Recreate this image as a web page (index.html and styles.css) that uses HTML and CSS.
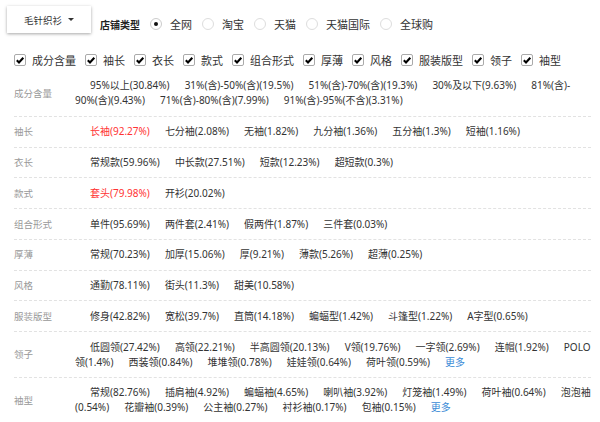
FILE: index.html
```html
<!DOCTYPE html>
<html>
<head>
<meta charset="utf-8">
<link rel="stylesheet" href="styles.css">
</head>
<body>
<div class="page">
  <div class="top">
    <div class="dropdown"><span>毛针织衫</span><span class="caret"></span></div>
    <div class="shop">
      <span class="shop-title">店铺类型</span>
      <span class="radio-item"><span class="radio on"></span><span>全网</span></span>
      <span class="radio-item"><span class="radio"></span><span>淘宝</span></span>
      <span class="radio-item"><span class="radio"></span><span>天猫</span></span>
      <span class="radio-item"><span class="radio"></span><span>天猫国际</span></span>
      <span class="radio-item"><span class="radio"></span><span>全球购</span></span>
    </div>
  </div>
  <div class="checks">
    <span class="check-item"><span class="cb"><svg viewBox="0 0 10 10"><polyline points="1.8,5.2 4,7.4 8.3,2.8"/></svg></span><span>成分含量</span></span>
    <span class="check-item"><span class="cb"><svg viewBox="0 0 10 10"><polyline points="1.8,5.2 4,7.4 8.3,2.8"/></svg></span><span>袖长</span></span>
    <span class="check-item"><span class="cb"><svg viewBox="0 0 10 10"><polyline points="1.8,5.2 4,7.4 8.3,2.8"/></svg></span><span>衣长</span></span>
    <span class="check-item"><span class="cb"><svg viewBox="0 0 10 10"><polyline points="1.8,5.2 4,7.4 8.3,2.8"/></svg></span><span>款式</span></span>
    <span class="check-item"><span class="cb"><svg viewBox="0 0 10 10"><polyline points="1.8,5.2 4,7.4 8.3,2.8"/></svg></span><span>组合形式</span></span>
    <span class="check-item"><span class="cb"><svg viewBox="0 0 10 10"><polyline points="1.8,5.2 4,7.4 8.3,2.8"/></svg></span><span>厚薄</span></span>
    <span class="check-item"><span class="cb"><svg viewBox="0 0 10 10"><polyline points="1.8,5.2 4,7.4 8.3,2.8"/></svg></span><span>风格</span></span>
    <span class="check-item"><span class="cb"><svg viewBox="0 0 10 10"><polyline points="1.8,5.2 4,7.4 8.3,2.8"/></svg></span><span>服装版型</span></span>
    <span class="check-item"><span class="cb"><svg viewBox="0 0 10 10"><polyline points="1.8,5.2 4,7.4 8.3,2.8"/></svg></span><span>领子</span></span>
    <span class="check-item"><span class="cb"><svg viewBox="0 0 10 10"><polyline points="1.8,5.2 4,7.4 8.3,2.8"/></svg></span><span>袖型</span></span>
  </div>
  <div class="rows">
    <div class="row">
      <div class="label">成分含量</div>
      <div class="vals"><span class="v">95%以上(30.84%)</span><wbr><span class="v">31%(含)-50%(含)(19.5%)</span><wbr><span class="v">51%(含)-70%(含)(19.3%)</span><wbr><span class="v">30%及以下(9.63%)</span><wbr><span class="v"><span class="nw">81%(含)-</span><wbr><span class="nw">90%(含)(9.43%)</span></span><wbr><span class="v">71%(含)-80%(含)(7.99%)</span><wbr><span class="v">91%(含)-95%(不含)(3.31%)</span></div>
    </div>
    <div class="row">
      <div class="label">袖长</div>
      <div class="vals"><span class="v red">长袖(92.27%)</span><wbr><span class="v">七分袖(2.08%)</span><wbr><span class="v">无袖(1.82%)</span><wbr><span class="v">九分袖(1.36%)</span><wbr><span class="v">五分袖(1.3%)</span><wbr><span class="v">短袖(1.16%)</span></div>
    </div>
    <div class="row">
      <div class="label">衣长</div>
      <div class="vals"><span class="v">常规款(59.96%)</span><wbr><span class="v">中长款(27.51%)</span><wbr><span class="v">短款(12.23%)</span><wbr><span class="v">超短款(0.3%)</span></div>
    </div>
    <div class="row">
      <div class="label">款式</div>
      <div class="vals"><span class="v red">套头(79.98%)</span><wbr><span class="v">开衫(20.02%)</span></div>
    </div>
    <div class="row">
      <div class="label">组合形式</div>
      <div class="vals"><span class="v">单件(95.69%)</span><wbr><span class="v">两件套(2.41%)</span><wbr><span class="v">假两件(1.87%)</span><wbr><span class="v">三件套(0.03%)</span></div>
    </div>
    <div class="row">
      <div class="label">厚薄</div>
      <div class="vals"><span class="v">常规(70.23%)</span><wbr><span class="v">加厚(15.06%)</span><wbr><span class="v">厚(9.21%)</span><wbr><span class="v">薄款(5.26%)</span><wbr><span class="v">超薄(0.25%)</span></div>
    </div>
    <div class="row">
      <div class="label">风格</div>
      <div class="vals"><span class="v">通勤(78.11%)</span><wbr><span class="v">街头(11.3%)</span><wbr><span class="v">甜美(10.58%)</span></div>
    </div>
    <div class="row">
      <div class="label">服装版型</div>
      <div class="vals"><span class="v">修身(42.82%)</span><wbr><span class="v">宽松(39.7%)</span><wbr><span class="v">直筒(14.18%)</span><wbr><span class="v">蝙蝠型(1.42%)</span><wbr><span class="v">斗篷型(1.22%)</span><wbr><span class="v">A字型(0.65%)</span></div>
    </div>
    <div class="row">
      <div class="label">领子</div>
      <div class="vals"><span class="v">低圆领(27.42%)</span><wbr><span class="v">高领(22.21%)</span><wbr><span class="v">半高圆领(20.13%)</span><wbr><span class="v">V领(19.76%)</span><wbr><span class="v">一字领(2.69%)</span><wbr><span class="v">连帽(1.92%)</span><wbr><span class="v"><span class="nw">POLO</span><wbr><span class="nw">领(1.4%)</span></span><wbr><span class="v">西装领(0.84%)</span><wbr><span class="v">堆堆领(0.78%)</span><wbr><span class="v">娃娃领(0.64%)</span><wbr><span class="v">荷叶领(0.59%)</span><wbr><span class="v more">更多</span></div>
    </div>
    <div class="row">
      <div class="label">袖型</div>
      <div class="vals"><span class="v">常规(82.76%)</span><wbr><span class="v">插肩袖(4.92%)</span><wbr><span class="v">蝙蝠袖(4.65%)</span><wbr><span class="v">喇叭袖(3.92%)</span><wbr><span class="v">灯笼袖(1.49%)</span><wbr><span class="v">荷叶袖(0.64%)</span><wbr><span class="v"><span class="nw">泡泡袖</span><wbr><span class="nw">(0.54%)</span></span><wbr><span class="v">花瓣袖(0.39%)</span><wbr><span class="v">公主袖(0.27%)</span><wbr><span class="v">衬衫袖(0.17%)</span><wbr><span class="v">包袖(0.15%)</span><wbr><span class="v more">更多</span></div>
    </div>
  </div>
</div>
</body>
</html>
```
FILE: styles.css
```css
html, body {
  margin: 0;
  padding: 0;
  background: #fff;
}
body {
  font-family: "Noto Sans", "Noto Sans CJK SC", sans-serif;
  color: #333;
  width: 600px;
  height: 422px;
  overflow: hidden;
}
.page {
  padding: 6px 0 0 0;
}
.top {
  display: flex;
  align-items: flex-start;
  padding-left: 7px;
  height: 43px;
}
.dropdown {
  width: 84px;
  height: 27px;
  box-shadow: 0 1px 3px rgba(0, 0, 0, 0.35);
  display: flex;
  align-items: center;
  justify-content: center;
  gap: 6px;
  font-family: "Noto Sans CJK SC", sans-serif;
  font-size: 9.5px;
  color: #333;
}
.caret {
  width: 0;
  height: 0;
  border-left: 3px solid transparent;
  border-right: 3px solid transparent;
  border-top: 3.5px solid #333;
}
.shop {
  display: flex;
  align-items: center;
  margin-left: 9px;
  height: 20px;
  margin-top: 8px;
  font-family: "Noto Sans CJK SC", sans-serif;
  font-size: 11px;
}
.shop-title {
  font-weight: bold;
  font-size: 10px;
  color: #222;
}
.radio-item {
  display: flex;
  align-items: center;
  margin-left: 10px;
  gap: 8px;
}
.radio {
  width: 10px;
  height: 10px;
  border: 1px solid #ddd;
  border-radius: 50%;
  box-sizing: content-box;
  position: relative;
}
.radio.on {
  border-color: #ccc;
}
.radio.on::after {
  content: "";
  position: absolute;
  left: 3px;
  top: 3px;
  width: 4px;
  height: 4px;
  border-radius: 50%;
  background: #111;
}
.checks {
  display: flex;
  align-items: center;
  padding-left: 14px;
  height: 22px;
  font-family: "Noto Sans CJK SC", sans-serif;
  font-size: 11px;
  color: #333;
}
.check-item {
  display: flex;
  align-items: center;
  margin-right: 9px;
}
.cb {
  width: 10px;
  height: 10px;
  border: 1px solid #aaa;
  border-radius: 2px;
  margin-right: 6px;
  display: flex;
}
.cb svg {
  width: 10px;
  height: 10px;
}
.cb polyline {
  fill: none;
  stroke: #000;
  stroke-width: 2.1;
}
.rows {
  margin-left: 14px;
  width: 577px;
}
.row {
  display: flex;
  align-items: center;
  padding: 7.4px 0;
  border-bottom: 1px dashed #e2e2e2;
}
.label {
  width: 61px;
  flex: none;
  font-family: "Noto Sans CJK SC", sans-serif;
  font-size: 9.5px;
  color: #999;
  line-height: 15px;
}
.vals {
  flex: 1;
  font-size: 10px;
  line-height: 15px;
  color: #333;
  margin-right: -4px;
}
.v {
  margin-left: 15px;
}
.nw {
  white-space: nowrap;
}
.red {
  color: #f33;
}
.more {
  color: #3a8ad6;
}
```
